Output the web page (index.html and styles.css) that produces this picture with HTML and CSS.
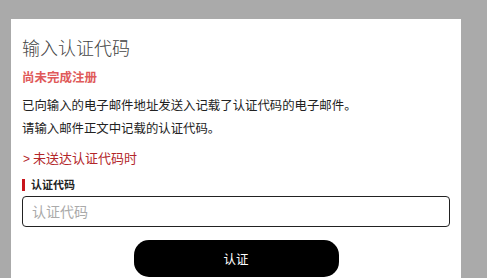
FILE: index.html
```html
<!DOCTYPE html>
<html lang="zh-CN">
<head>
  <meta charset="UTF-8">
  <meta name="viewport" content="width=device-width, initial-scale=1.0">
  <title>输入认证代码</title>
  <link rel="stylesheet" href="styles.css">
</head>
<body>
  <div class="card">
    <h1 class="title">输入认证代码</h1>
    <p class="notice">尚未完成注册</p>
    <p class="desc">已向输入的电子邮件地址发送入记载了认证代码的电子邮件。<br>请输入邮件正文中记载的认证代码。</p>
    <a class="help-link" href="#"><span class="arrow">&gt;</span>未送达认证代码时</a>
    <label class="field-label" for="code">认证代码</label>
    <input type="text" id="code" class="code-input" placeholder="认证代码">
    <button class="submit-btn">认证</button>
  </div>
</body>
</html>
```

FILE: styles.css
```css
*, *::before, *::after {
    box-sizing: border-box;
}
body {
    margin: 0;
    background-color: #aaaaaa;
    font-family: 'Liberation Sans', 'Noto Sans CJK SC', sans-serif;
    color: #222;
}
.card {
    background: #fff;
    width: 450px;
    margin: 19px 0 0 11px;
    padding: 18px 11px 20px;
    min-height: 300px;
}
.title {
    margin: 0;
    font-size: 18px;
    line-height: 24px;
    font-weight: 300;
    color: #444;
}
.notice {
    margin: 8px 0 0;
    font-size: 12.5px;
    line-height: 18px;
    font-weight: bold;
    color: #e05a5a;
}
.desc {
    margin: 8px 0 0;
    font-size: 12.4px;
    line-height: 23px;
    color: #222;
}
.help-link {
    display: block;
    margin-top: 8px;
    font-size: 13px;
    line-height: 20px;
    color: #b3262a;
    text-decoration: none;
}
.help-link .arrow {
    display: inline-block;
    width: 10px;
    margin-left: 1px;
    font-size: 12px;
}
.field-label {
    display: block;
    margin-top: 10px;
    padding-left: 6px;
    border-left: 3px solid #c8161d;
    font-size: 11px;
    line-height: 12px;
    font-weight: bold;
    color: #222;
}
.code-input {
    display: block;
    width: 100%;
    height: 31px;
    margin-top: 5px;
    padding: 0 9px;
    border: 1px solid #222;
    border-radius: 4px;
    font-family: inherit;
    font-size: 14px;
    outline: none;
}
.code-input::placeholder {
    color: #aaa;
}
.submit-btn {
    display: block;
    width: 205px;
    height: 37px;
    margin: 13px auto 0;
    border: none;
    border-radius: 15px;
    background: #000;
    color: #fff;
    font-family: inherit;
    font-size: 12.5px;
    cursor: pointer;
}
```
